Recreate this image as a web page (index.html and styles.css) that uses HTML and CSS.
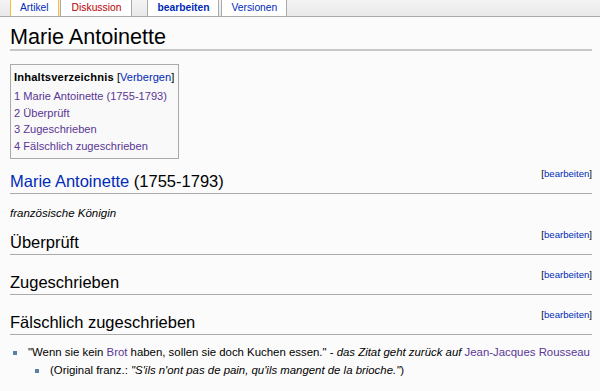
FILE: index.html
```html
<!DOCTYPE html>
<html lang="de">

<head>
    <meta charset="UTF-8">
    <meta name="viewport" content="width=device-width, initial-scale=1.0">
    <title>Marie Antoinette</title>
    <link rel="stylesheet" href="styles.css">
</head>

<body>
    <div class="tabs">
        <a class="tab selected" href="#">Artikel</a>
        <a class="tab talk new" href="#">Diskussion</a>
        <a class="tab bold" href="#">bearbeiten</a>
        <a class="tab" href="#">Versionen</a>
    </div>

    <div class="content">
        <h1 class="title">Marie Antoinette</h1>

        <div class="toc">
            <div class="toc-title"><b>Inhaltsverzeichnis</b> [<a href="#">Verbergen</a>]</div>
            <ul>
                <li><a class="visited" href="#">1 Marie Antoinette (1755-1793)</a></li>
                <li><a class="visited" href="#">2 Überprüft</a></li>
                <li><a class="visited" href="#">3 Zugeschrieben</a></li>
                <li><a class="visited" href="#">4 Fälschlich zugeschrieben</a></li>
            </ul>
        </div>

        <h2 class="heading">
            <span><a href="#">Marie Antoinette</a> (1755-1793)</span>
            <span class="edit">[<a href="#">bearbeiten</a>]</span>
        </h2>
        <p class="subtitle">französische Königin</p>

        <h2 class="heading">
            <span>Überprüft</span>
            <span class="edit">[<a href="#">bearbeiten</a>]</span>
        </h2>

        <h2 class="heading">
            <span>Zugeschrieben</span>
            <span class="edit">[<a href="#">bearbeiten</a>]</span>
        </h2>

        <h2 class="heading">
            <span>Fälschlich zugeschrieben</span>
            <span class="edit">[<a href="#">bearbeiten</a>]</span>
        </h2>

        <ul class="quotes">
            <li>"Wenn sie kein <a class="visited" href="#">Brot</a> haben, sollen sie doch Kuchen essen." - <i>das Zitat geht zurück auf</i> <a class="visited" href="#">Jean-Jacques Rousseau</a>
                <ul>
                    <li>(Original franz.: <i>"S'ils n'ont pas de pain, qu'ils mangent de la brioche."</i>)</li>
                </ul>
            </li>
        </ul>
    </div>
</body>

</html>
```

FILE: styles.css
```css
body {
    margin: 0;
    background: #fbfbfb;
    font-family: "Liberation Sans", Arial, sans-serif;
    font-size: 11.5px;
    color: #000;
}

a {
    color: #002bb8;
    text-decoration: none;
}

a.visited {
    color: #5a3696;
}

/* tab bar */
.tabs {
    display: flex;
    height: 16px;
    padding-left: 10px;
    background: linear-gradient(#f4f4f4, #e9e9e9);
    border-bottom: 1px solid #aaa;
}

.tab {
    background: #fff;
    border-left: 1px solid #aaa;
    border-right: 1px solid #aaa;
    padding: 0 9px;
    margin-right: 1px;
    font-size: 10.3px;
    line-height: 16px;
}

.tab.selected {
    border-color: #fabd23;
}

.tab.new {
    color: #ba0000;
    padding: 0 10px 0 11px;
}

.tab.talk {
    margin-right: 15px;
}

.tab.bold {
    font-weight: bold;
    margin-right: 2px;
}

/* page content */
.content {
    padding: 0 8px 0 10px;
}

.title {
    margin: 8px 0 0;
    font-size: 21.6px;
    font-weight: normal;
    line-height: 24px;
    border-bottom: 2px solid #c8c8c8;
}

.toc {
    display: inline-block;
    margin-top: 13px;
    padding: 4px 4px 3px 3px;
    border: 1px solid #aaa;
    background: #f9f9f9;
    font-size: 11.1px;
}

.toc-title {
    line-height: 16px;
}

.toc-title b {
    letter-spacing: 0.2px;
}

.toc ul {
    list-style: none;
    margin: 3px 0 0;
    padding: 0;
}

.toc li {
    line-height: 16.7px;
}

.heading {
    display: flex;
    justify-content: space-between;
    align-items: flex-start;
    margin: 17px 0 0;
    padding-bottom: 2px;
    font-size: 16.5px;
    font-weight: normal;
    line-height: 20px;
    border-bottom: 1px solid #aaa;
}

.toc + .heading {
    margin-top: 12px;
}

.edit {
    font-size: 9.6px;
    line-height: 10px;
    margin-top: -2px;
}

.subtitle {
    margin: 12px 0 0;
    font-style: italic;
    line-height: 15px;
}

.subtitle + .heading {
    margin-top: 11px;
}

.quotes {
    margin: 9px 0 0;
    padding: 0 0 0 18px;
    list-style: none;
    font-size: 11.4px;
    white-space: nowrap;
}

.quotes li {
    position: relative;
    line-height: 17.7px;
}

.quotes li::before {
    content: "";
    position: absolute;
    left: -15px;
    top: 7px;
    width: 4px;
    height: 4px;
    background: #5b7fa6;
}

.quotes ul {
    margin: 0;
    padding: 0 0 0 22px;
    list-style: none;
}
```
